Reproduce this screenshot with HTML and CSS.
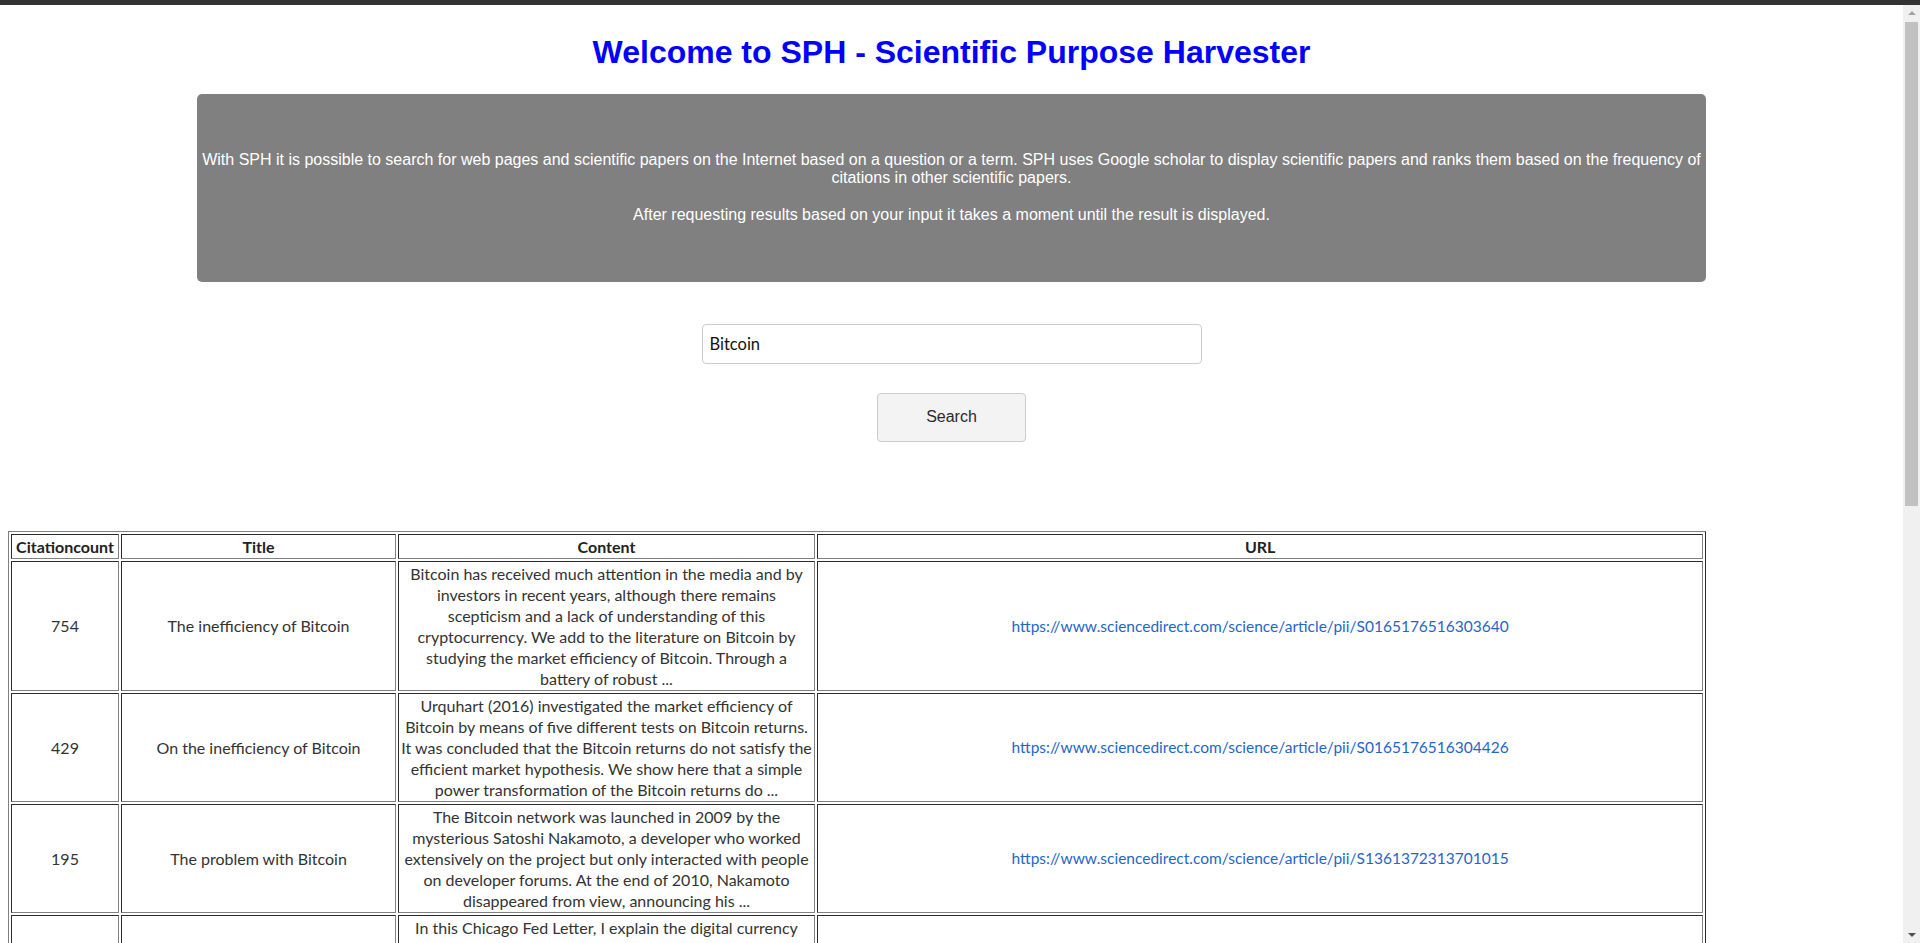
FILE: index.html
```html
<!DOCTYPE html>
<html lang="en">
<head>
<meta charset="utf-8">
<title>SPH - Scientific Purpose Harvester</title>
<link rel="stylesheet" href="styles.css">
</head>
<body>
<div class="topbar"></div>
<main class="page">
  <h1 class="title">Welcome to SPH - Scientific Purpose Harvester</h1>
  <section class="info">
    <p>With SPH it is possible to search for web pages and scientific papers on the Internet based on a question or a term. SPH uses Google scholar to display scientific papers and ranks them based on the frequency of citations in other scientific papers.<br><br>After requesting results based on your input it takes a moment until the result is displayed.</p>
  </section>
  <form class="search">
    <input class="search-input" type="text" value="Bitcoin">
    <button class="search-btn" type="button">Search</button>
  </form>
  <table class="results">
    <thead>
      <tr>
        <th class="c-count">Citationcount</th>
        <th class="c-title">Title</th>
        <th class="c-content">Content</th>
        <th class="c-url">URL</th>
      </tr>
    </thead>
    <tbody>
      <tr>
        <td>754</td>
        <td>The inefficiency of Bitcoin</td>
        <td>Bitcoin has received much attention in the media and by investors in recent years, although there remains scepticism and a lack of understanding of this cryptocurrency. We add to the literature on Bitcoin by studying the market efficiency of Bitcoin. Through a battery of robust ...</td>
        <td><a href="#">https://www.sciencedirect.com/science/article/pii/S0165176516303640</a></td>
      </tr>
      <tr>
        <td>429</td>
        <td>On the inefficiency of Bitcoin</td>
        <td>Urquhart (2016) investigated the market efficiency of Bitcoin by means of five different tests on Bitcoin returns. It was concluded that the Bitcoin returns do not satisfy the efficient market hypothesis. We show here that a simple power transformation of the Bitcoin returns do ...</td>
        <td><a href="#">https://www.sciencedirect.com/science/article/pii/S0165176516304426</a></td>
      </tr>
      <tr>
        <td>195</td>
        <td>The problem with Bitcoin</td>
        <td>The Bitcoin network was launched in 2009 by the mysterious Satoshi Nakamoto, a developer who worked extensively on the project but only interacted with people on developer forums. At the end of 2010, Nakamoto disappeared from view, announcing his ...</td>
        <td><a href="#">https://www.sciencedirect.com/science/article/pii/S1361372313701015</a></td>
      </tr>
      <tr>
        <td>183</td>
        <td>Bitcoin: A primer</td>
        <td>In this Chicago Fed Letter, I explain the digital currency called bitcoin and what it may mean for the payments system. I describe how bitcoins are created and exchanged, and consider ...</td>
        <td><a href="#">https://www.chicagofed.org/publications/chicago-fed-letter/2013/december-317</a></td>
      </tr>
    </tbody>
  </table>
</main>
<div class="scrollbar" aria-hidden="true">
  <span class="sb-arrow sb-up"></span>
  <span class="sb-thumb"></span>
  <span class="sb-arrow sb-down"></span>
</div>
</body>
</html>
```

FILE: styles.css
```css
html, body {
  margin: 0;
  padding: 0;
  background: #ffffff;
}

body {
  font-family: "Lato", "Open Sans", sans-serif;
  font-size: 16px;
  color: #333333;
}

.topbar {
  height: 5px;
  background: #333333;
}

.page {
  padding: 8px 8px 40px;
  margin-right: 17px;
}

.title {
  font-family: "Liberation Sans", Arial, sans-serif;
  font-size: 32px;
  font-weight: bold;
  color: #0000ff;
  text-align: center;
  margin: 21px 0 23px;
}

.info {
  width: 80%;
  margin: 0 auto;
  box-sizing: border-box;
  padding: 57px 3px;
  background: #808080;
  border-radius: 5px;
  color: #ffffff;
  font-family: "Liberation Sans", Arial, sans-serif;
  font-size: 16px;
  text-align: center;
}

.info p {
  margin: 0;
  line-height: 18.4px;
}

.search {
  display: flex;
  flex-direction: column;
  align-items: center;
  gap: 29px;
  margin: 42px 0 89px;
}

.search-input {
  box-sizing: border-box;
  width: 500px;
  height: 40px;
  padding: 0 7px;
  border: 1px solid #cccccc;
  border-radius: 4px;
  font-family: "Lato", "Open Sans", sans-serif;
  font-size: 16.5px;
  color: #111111;
  background: #ffffff;
  outline: none;
}

.search-btn {
  box-sizing: border-box;
  width: 149px;
  height: 49px;
  border: 1px solid #cccccc;
  border-radius: 4px;
  background: #f3f3f3;
  color: #2a2a2a;
  font-family: "Liberation Sans", Arial, sans-serif;
  font-size: 16px;
  cursor: pointer;
}

.results {
  width: 90%;
  table-layout: fixed;
  border-collapse: separate;
  border-spacing: 2px;
  border: 1px outset grey;
  line-height: 21px;
}

.results th,
.results td {
  border: 1px inset grey;
  padding: 1px;
  text-align: center;
  vertical-align: middle;
}

.results th {
  font-weight: bold;
  color: #222222;
}

.c-count { width: 104px; }
.c-title { width: 271px; }
.c-content { width: 413px; }

.results a {
  color: #1f66c9;
  font-size: 15.5px;
  text-decoration: none;
}

/* browser scrollbar drawn over the right edge of the window */
.scrollbar {
  position: fixed;
  top: 5px;
  right: 0;
  bottom: 0;
  width: 17px;
  background: #f0f0f0;
  display: flex;
  flex-direction: column;
  align-items: center;
}

.sb-arrow {
  width: 0;
  height: 0;
  border-left: 4px solid transparent;
  border-right: 4px solid transparent;
}

.sb-up {
  margin-top: 6px;
  border-bottom: 4px solid #a3a3a3;
}

.sb-down {
  margin-top: auto;
  margin-bottom: 6px;
  border-top: 4px solid #505050;
}

.sb-thumb {
  width: 13px;
  height: 484px;
  margin-top: 7px;
  background: #c1c1c1;
}
```
